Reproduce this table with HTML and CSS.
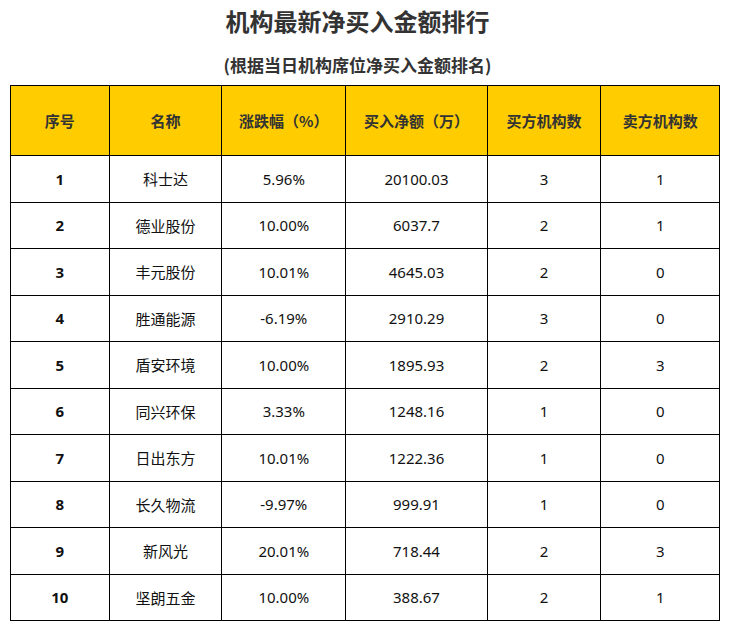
FILE: index.html
```html
<!DOCTYPE html>
<html lang="zh-CN">
<head>
<meta charset="utf-8">
<title>机构最新净买入金额排行</title>
<link rel="stylesheet" href="styles.css">
</head>
<body>
<div class="page">
  <h1 class="title">机构最新净买入金额排行</h1>
  <p class="subtitle">(根据当日机构席位净买入金额排名)</p>
  <table class="rank">
    <colgroup>
      <col class="c1"><col class="c2"><col class="c3"><col class="c4"><col class="c5"><col class="c6">
    </colgroup>
    <thead>
      <tr><th>序号</th><th>名称</th><th>涨跌幅（%）</th><th>买入净额（万）</th><th>买方机构数</th><th>卖方机构数</th></tr>
    </thead>
    <tbody>
      <tr><td class="no">1</td><td>科士达</td><td>5.96%</td><td>20100.03</td><td>3</td><td>1</td></tr>
      <tr><td class="no">2</td><td>德业股份</td><td>10.00%</td><td>6037.7</td><td>2</td><td>1</td></tr>
      <tr><td class="no">3</td><td>丰元股份</td><td>10.01%</td><td>4645.03</td><td>2</td><td>0</td></tr>
      <tr><td class="no">4</td><td>胜通能源</td><td>-6.19%</td><td>2910.29</td><td>3</td><td>0</td></tr>
      <tr><td class="no">5</td><td>盾安环境</td><td>10.00%</td><td>1895.93</td><td>2</td><td>3</td></tr>
      <tr><td class="no">6</td><td>同兴环保</td><td>3.33%</td><td>1248.16</td><td>1</td><td>0</td></tr>
      <tr><td class="no">7</td><td>日出东方</td><td>10.01%</td><td>1222.36</td><td>1</td><td>0</td></tr>
      <tr><td class="no">8</td><td>长久物流</td><td>-9.97%</td><td>999.91</td><td>1</td><td>0</td></tr>
      <tr><td class="no">9</td><td>新风光</td><td>20.01%</td><td>718.44</td><td>2</td><td>3</td></tr>
      <tr><td class="no">10</td><td>坚朗五金</td><td>10.00%</td><td>388.67</td><td>2</td><td>1</td></tr>
    </tbody>
  </table>
</div>
</body>
</html>
```
FILE: styles.css
```css
html, body {
  margin: 0;
  padding: 0;
  background: #ffffff;
}
body {
  font-family: "Noto Sans", "Noto Sans CJK SC", sans-serif;
  color: #000;
}
.page {
  padding: 9px 10px 0 10px;
}
.title {
  margin: 0;
  padding-right: 14px;
  font-family: "Noto Sans CJK SC", sans-serif;
  font-size: 24px;
  line-height: 24px;
  font-weight: 700;
  color: #333;
  text-align: center;
}
.subtitle {
  margin: 22px 0 0 0;
  padding-right: 14px;
  font-family: "Noto Sans CJK SC", sans-serif;
  font-size: 17px;
  line-height: 20px;
  font-weight: 700;
  color: #333;
  text-align: center;
}
.rank {
  margin-top: 10px;
  width: 709.5px;
  border-collapse: collapse;
  table-layout: fixed;
}
.c1 { width: 98.7px; }
.c2 { width: 112.6px; }
.c3 { width: 124px; }
.c4 { width: 141.4px; }
.c5 { width: 113.6px; }
.c6 { width: 119.2px; }
.rank th, .rank td {
  border: 1px solid #000;
  padding: 0;
  text-align: center;
  vertical-align: middle;
}
.rank th {
  height: 69px;
  background: #ffcc00;
  color: #333;
  font-family: "Noto Sans CJK SC", sans-serif;
  font-size: 15px;
  font-weight: 700;
}
.rank td {
  height: 45.5px;
  font-size: 15px;
  color: #111;
}
.rank td.no {
  font-weight: 700;
  color: #111;
}
```
